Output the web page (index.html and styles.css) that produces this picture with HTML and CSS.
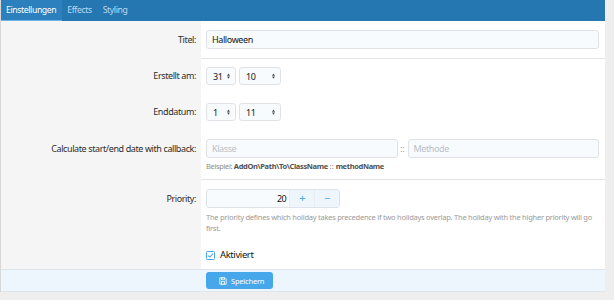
FILE: index.html
```html
<!DOCTYPE html>
<html lang="de">
<head>
  <meta charset="UTF-8">
  <title>Feiertag bearbeiten</title>
  <link rel="stylesheet" href="styles.css">
</head>
<body>
  <div class="panel">
    <div class="tabs">
      <span class="tab is-active">Einstellungen</span>
      <span class="tab">Effects</span>
      <span class="tab">Styling</span>
    </div>

    <div class="form-body">
      <div class="row">
        <div class="label">Titel:</div>
        <div class="field">
          <div class="input">Halloween</div>
        </div>
      </div>

      <div class="row row--separated row--select">
        <div class="label">Erstellt am:</div>
        <div class="field field--inline">
          <div class="select select--day">31
            <svg class="arrows" viewBox="0 0 4 7"><path d="M2 0 L4 3 H0 Z M2 7 L4 4 H0 Z" /></svg>
          </div>
          <div class="select select--month">10
            <svg class="arrows" viewBox="0 0 4 7"><path d="M2 0 L4 3 H0 Z M2 7 L4 4 H0 Z" /></svg>
          </div>
        </div>
      </div>

      <div class="row row--select">
        <div class="label">Enddatum:</div>
        <div class="field field--inline">
          <div class="select select--day">1
            <svg class="arrows" viewBox="0 0 4 7"><path d="M2 0 L4 3 H0 Z M2 7 L4 4 H0 Z" /></svg>
          </div>
          <div class="select select--month">11
            <svg class="arrows" viewBox="0 0 4 7"><path d="M2 0 L4 3 H0 Z M2 7 L4 4 H0 Z" /></svg>
          </div>
        </div>
      </div>

      <div class="row row--callback">
        <div class="label">Calculate start/end date with callback:</div>
        <div class="field">
          <div class="callback">
            <div class="input input--placeholder">Klasse</div>
            <span class="callback-sep">::</span>
            <div class="input input--placeholder">Methode</div>
          </div>
          <div class="explain">Beispiel: <b>AddOn\Path\To\ClassName</b> <span class="colons">::</span> <b>methodName</b></div>
        </div>
      </div>

      <div class="row row--separated row--priority">
        <div class="label">Priority:</div>
        <div class="field">
          <div class="number">
            <div class="number-value">20</div>
            <div class="number-btn">+</div>
            <div class="number-btn">&minus;</div>
          </div>
          <div class="explain explain--help">The priority defines which holiday takes precedence if two holidays overlap. The holiday with the higher priority will go first.</div>
        </div>
      </div>

      <div class="row row--check">
        <div class="label"></div>
        <div class="field">
          <label class="check">
            <svg class="check-box" viewBox="0 0 9 9">
              <rect x="0.5" y="0.5" width="8" height="8" rx="1" fill="none" stroke="#47a7eb" />
              <path d="M2.2 4.6 L3.8 6.1 L6.9 2.9" fill="none" stroke="#47a7eb" stroke-width="1.1" />
            </svg>
            Aktiviert
          </label>
        </div>
      </div>
    </div>

    <div class="footer">
      <div class="footer-spacer"></div>
      <div class="footer-actions">
        <button class="button">
          <svg class="button-icon" viewBox="0 0 10 10">
            <path d="M1 1 H7.5 L9 2.5 V9 H1 Z" fill="none" stroke="#fff" stroke-width="1" />
            <rect x="3" y="1" width="4" height="2.5" fill="none" stroke="#fff" stroke-width="0.9" />
            <rect x="3" y="5.5" width="4" height="3.5" fill="none" stroke="#fff" stroke-width="0.9" />
          </svg>
          Speichern
        </button>
      </div>
    </div>
  </div>
</body>
</html>
```

FILE: styles.css
```css
body {
  margin: 0;
  padding: 0 9px 8px 0;
  background-color: #eeeeee;
  font-family: "Noto Sans", "Open Sans", sans-serif;
  letter-spacing: -0.4px;
  color: #141414;
}
.panel {
  width: 604px;
  border-left: 1px solid #d8d8d8;
  background: #fff;
}
.tabs {
  display: flex;
  height: 21px;
  background-color: #2577b1;
}
.tab {
  font-size: 8.7px;
  line-height: 20px;
  padding: 0 6px 0 5px;
  letter-spacing: -0.4px;
  color: #bcd9f0;
}
.tab.is-active {
  color: #fff;
  background-color: #2b80bd;
  border-bottom: 1px solid #6fb3e6;
}
.row {
  display: flex;
}
.label {
  width: 195px;
  flex-shrink: 0;
  padding: 9px 5px 9px 0;
  background-color: #f5f5f5;
  text-align: right;
  font-size: 9px;
  line-height: 19px;
  color: #2d2d2d;
}
.field {
  flex: 1;
  padding: 9px 6px 9px 5px;
  min-width: 0;
}
.row--separated .field {
  border-top: 1px solid #e4e4e4;
}
.row--separated .label {
  border-top: 1px solid #f5f5f5;
}
.input {
  height: 17px;
  border: 1px solid #dfe3e8;
  border-radius: 3px;
  background-color: #f8fbfd;
  padding: 0 5px;
  font-size: 9px;
  line-height: 17px;
  color: #141414;
}
.input--placeholder {
  flex: 1;
  color: #b9c0c7;
}
.row--select .label {
  line-height: 18px;
}
.row--separated.row--select .label,
.row--separated.row--select .field {
  padding-top: 8px;
}
.field--inline {
  display: flex;
  gap: 3px;
}
.select {
  display: flex;
  align-items: center;
  justify-content: space-between;
  height: 16px;
  border: 1px solid #dfe3e8;
  border-radius: 3px;
  background-color: #f8fbfd;
  padding: 0 5px 0 6px;
  font-size: 9px;
  color: #141414;
}
.select--day {
  width: 17px;
}
.select--month {
  width: 29px;
}
.arrows {
  width: 3px;
  height: 6px;
  fill: #4a4a4a;
}
.callback {
  display: flex;
  align-items: center;
}
.callback-sep {
  width: 10px;
  text-align: center;
  font-size: 8px;
  letter-spacing: 0;
  color: #8c8c8c;
}
.row--callback .field {
  padding-bottom: 7px;
}
.explain {
  margin-top: 3px;
  font-size: 7.5px;
  line-height: 11px;
  letter-spacing: -0.35px;
  color: #8c8c8c;
}
.explain b {
  color: #505050;
}
.explain .colons {
  letter-spacing: 0.3px;
}
.explain--help {
  margin-top: 4px;
  letter-spacing: -0.25px;
  color: #9a9a9a;
}
.row--priority .field {
  padding-bottom: 6px;
}
.number {
  display: flex;
  width: 134px;
  height: 19px;
  border: 1px solid #dfe3e8;
  border-radius: 3px;
  background-color: #f8fbfd;
  box-sizing: border-box;
}
.number-value {
  width: 80px;
  padding-right: 3px;
  text-align: right;
  font-size: 9px;
  line-height: 17px;
  border-right: 1px solid #e8edf2;
}
.number-btn {
  width: 24px;
  text-align: center;
  font-size: 11px;
  line-height: 16px;
  letter-spacing: 0;
  color: #47a7eb;
  background-color: #eef5fb;
  border-right: 1px solid #e8edf2;
}
.number-btn:last-child {
  border-right: none;
}
.row--check .label,
.row--check .field {
  padding-top: 6px;
  padding-bottom: 5px;
}
.check {
  display: flex;
  align-items: center;
  gap: 5px;
  font-size: 9.5px;
  line-height: 18px;
  color: #141414;
}
.check-box {
  width: 9px;
  height: 9px;
}
.footer {
  display: flex;
  border-top: 1px solid #d9e5f1;
  border-bottom: 1px solid #e1e6eb;
  background-color: #edf5fd;
}
.footer-spacer {
  width: 200px;
  flex-shrink: 0;
}
.footer-actions {
  padding: 2px 5px 2px 5px;
}
.button {
  display: flex;
  align-items: center;
  gap: 4px;
  width: 67px;
  height: 17px;
  padding: 0 0 0 13px;
  border: none;
  border-radius: 3px;
  background-color: #47a7eb;
  color: #fff;
  font-family: "Noto Sans", "Open Sans", sans-serif;
  font-size: 7.5px;
  letter-spacing: -0.2px;
}
.button-icon {
  width: 8px;
  height: 8px;
}
```
